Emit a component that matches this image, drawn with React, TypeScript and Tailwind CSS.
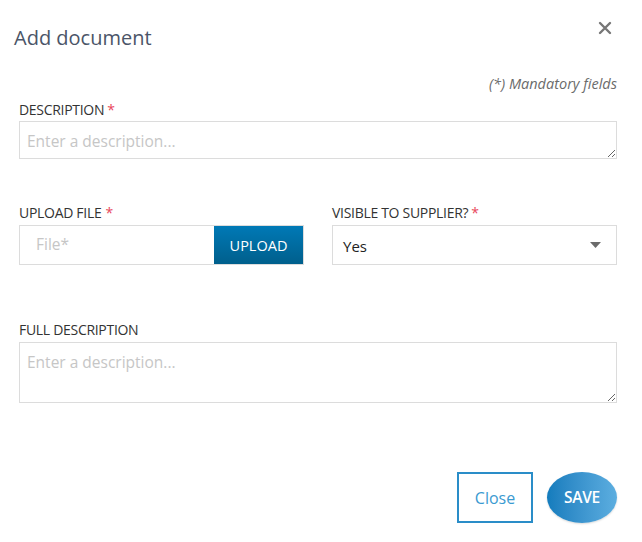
import React from "react";

export default function App() {
  return (
    <div
      className="w-[642px] h-[542px] bg-white relative"
      style={{ fontFamily: '"Open Sans", "Noto Sans", sans-serif' }}
    >
      <div className="flex justify-between items-start pl-[14px] pr-[30px] pt-[25px]">
        <h1 className="text-[20px] leading-[26px] text-[#4b5568] font-medium">Add document</h1>
        <button className="mt-[-4px] text-[#7a7a7a]" aria-label="close">
          <svg width="14" height="14" viewBox="0 0 14 14">
            <path d="M2 2 L12 12 M12 2 L2 12" stroke="#777" strokeWidth="2.4" strokeLinecap="round" />
          </svg>
        </button>
      </div>

      <div className="pl-[19px] pr-[25px]">
        <div className="text-right italic font-medium text-[14.5px] leading-[16px] text-[#6b6b6b] mt-[25px]">
          (*) Mandatory fields
        </div>

        <div className="mt-[9px]">
          <label className="block text-[14px] leading-[18px] text-[#333] tracking-[-0.3px]">
            DESCRIPTION<span className="text-[#e8475b] ml-[3px]">*</span>
          </label>
          <textarea
            className="block mt-[2px] w-full h-[38px] border border-[#dcdcdc] px-[7px] pt-[8px] pb-[4px] text-[15.5px] leading-[22px] placeholder:text-[#c6c6c6] outline-none resize-y"
            placeholder="Enter a description..."
          />
        </div>

        <div className="mt-[45px] grid grid-cols-2 gap-[28px]">
          <div className="min-w-0">
            <label className="block text-[14px] leading-[18px] text-[#333] tracking-[-0.3px]">
              UPLOAD FILE<span className="text-[#e8475b] ml-[4px]">*</span>
            </label>
            <div className="mt-[3px] flex h-[40px] border border-[#dcdcdc]">
              <input
                className="flex-1 min-w-0 w-0 px-[16px] text-[15.5px] placeholder:text-[#c6c6c6] outline-none"
                placeholder="File*"
              />
              <button className="w-[89px] h-full bg-gradient-to-b from-[#0079b6] to-[#005f8c] text-white text-[14.5px] font-medium pt-[2px]">
                UPLOAD
              </button>
            </div>
          </div>
          <div className="min-w-0">
            <label className="block text-[14px] leading-[18px] text-[#333] tracking-[-0.3px]">
              VISIBLE TO SUPPLIER?<span className="text-[#e8475b] ml-[3px]">*</span>
            </label>
            <div className="mt-[3px] flex items-center justify-between h-[40px] border border-[#dcdcdc] pl-[10px] pr-[15px]">
              <span className="text-[15px] text-[#222] pt-[2px]">Yes</span>
              <svg width="11" height="6" viewBox="0 0 11 6">
                <path d="M0 0 L11 0 L5.5 6 Z" fill="#6b6b6b" />
              </svg>
            </div>
          </div>
        </div>

        <div className="mt-[56px]">
          <label className="block text-[14px] leading-[18px] text-[#333] tracking-[-0.3px]">
            FULL DESCRIPTION
          </label>
          <textarea
            className="block mt-[3px] w-full h-[61px] border border-[#dcdcdc] px-[7px] pt-[8px] pb-[4px] text-[15.5px] leading-[22px] placeholder:text-[#c6c6c6] outline-none resize-y"
            placeholder="Enter a description..."
          />
        </div>

        <div className="mt-[69px] flex justify-end gap-[14px]">
          <button className="w-[76px] h-[51px] border-2 border-[#2a8dc8] text-[#3a9ad1] text-[16px] bg-white">
            Close
          </button>
          <button className="w-[70px] h-[51px] rounded-[50%] bg-gradient-to-r from-[#137cbd] to-[#5caee0] text-white text-[15.5px] font-semibold tracking-[-0.3px] shadow-[0_1px_2px_rgba(0,0,0,0.15)]">
            SAVE
          </button>
        </div>
      </div>
    </div>
  );
}
